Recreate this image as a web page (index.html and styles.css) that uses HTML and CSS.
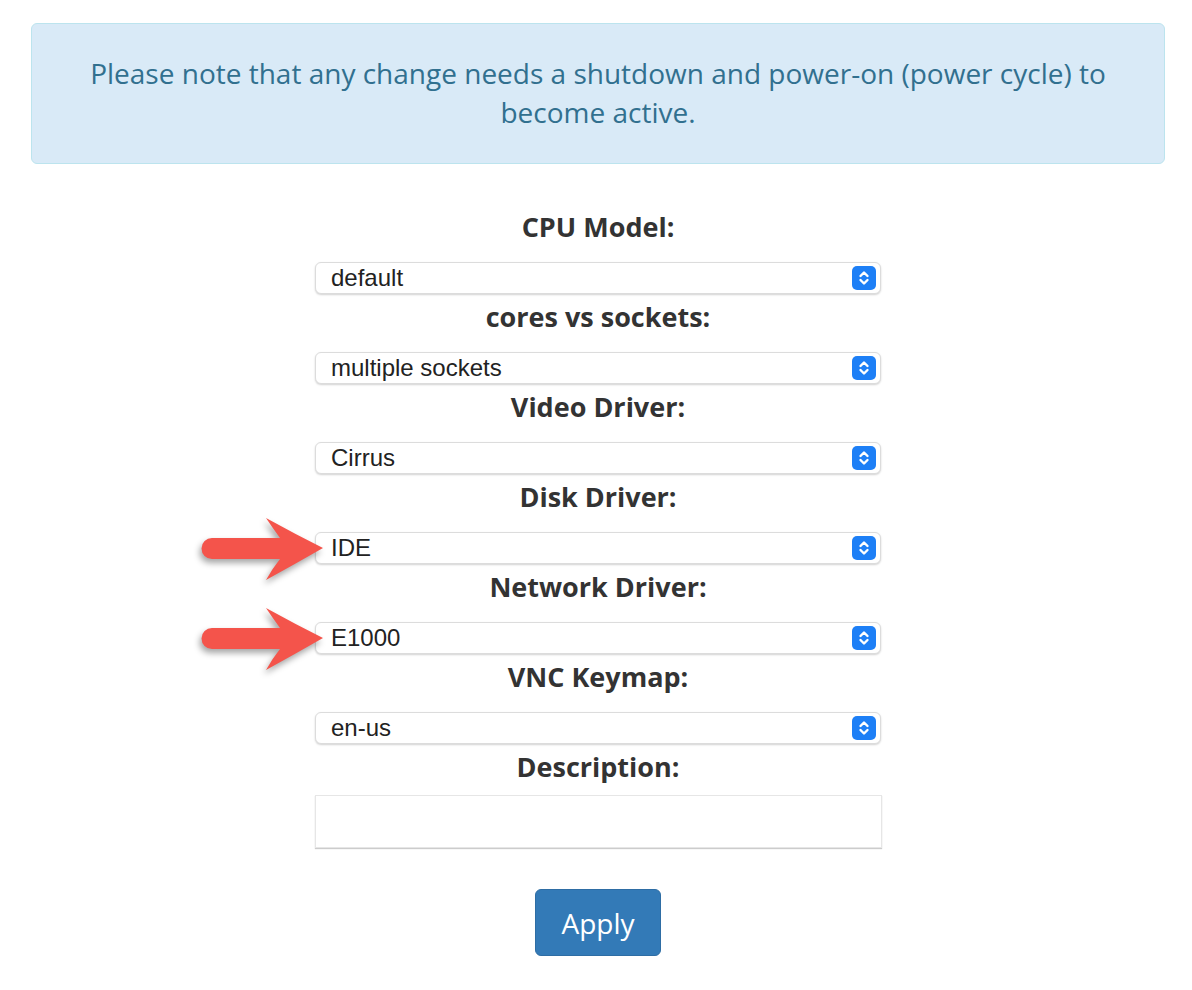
FILE: index.html
```html
<!DOCTYPE html>
<html lang="en">
<head>
  <meta charset="UTF-8">
  <meta name="viewport" content="width=device-width, initial-scale=1.0">
  <title>VM Settings</title>
  <link rel="stylesheet" href="styles.css">
</head>
<body>

  <div class="page">
    <div class="alert-info">
      Please note that any change needs a shutdown and power-on (power cycle) to become active.
    </div>

    <form class="settings">
      <label class="field-label" for="cpu">CPU Model:</label>
      <div class="select-wrap">
        <select id="cpu" class="field-select"><option>default</option></select>
        <svg class="select-btn" viewBox="0 0 24 24"><rect width="24" height="24" rx="5"/><path d="M8.5 10 L12 6.5 L15.5 10 M8.5 14 L12 17.5 L15.5 14"/></svg>
      </div>

      <label class="field-label" for="cores">cores vs sockets:</label>
      <div class="select-wrap">
        <select id="cores" class="field-select"><option>multiple sockets</option></select>
        <svg class="select-btn" viewBox="0 0 24 24"><rect width="24" height="24" rx="5"/><path d="M8.5 10 L12 6.5 L15.5 10 M8.5 14 L12 17.5 L15.5 14"/></svg>
      </div>

      <label class="field-label" for="video">Video Driver:</label>
      <div class="select-wrap">
        <select id="video" class="field-select"><option>Cirrus</option></select>
        <svg class="select-btn" viewBox="0 0 24 24"><rect width="24" height="24" rx="5"/><path d="M8.5 10 L12 6.5 L15.5 10 M8.5 14 L12 17.5 L15.5 14"/></svg>
      </div>

      <label class="field-label" for="disk">Disk Driver:</label>
      <div class="select-wrap">
        <select id="disk" class="field-select"><option>IDE</option></select>
        <svg class="select-btn" viewBox="0 0 24 24"><rect width="24" height="24" rx="5"/><path d="M8.5 10 L12 6.5 L15.5 10 M8.5 14 L12 17.5 L15.5 14"/></svg>
        <!-- callout arrow -->
        <svg class="callout" viewBox="0 0 124 64"><path d="M12 21 L80 21 Q72 10 66 1 Q95 17 123 31 Q95 47 66 63 Q72 52 80 42 L12 42 A10.5 10.5 0 0 1 12 21 Z"/></svg>
      </div>

      <label class="field-label" for="net">Network Driver:</label>
      <div class="select-wrap">
        <select id="net" class="field-select"><option>E1000</option></select>
        <svg class="select-btn" viewBox="0 0 24 24"><rect width="24" height="24" rx="5"/><path d="M8.5 10 L12 6.5 L15.5 10 M8.5 14 L12 17.5 L15.5 14"/></svg>
        <svg class="callout" viewBox="0 0 124 64"><path d="M12 21 L80 21 Q72 10 66 1 Q95 17 123 31 Q95 47 66 63 Q72 52 80 42 L12 42 A10.5 10.5 0 0 1 12 21 Z"/></svg>
      </div>

      <label class="field-label" for="keymap">VNC Keymap:</label>
      <div class="select-wrap">
        <select id="keymap" class="field-select"><option>en-us</option></select>
        <svg class="select-btn" viewBox="0 0 24 24"><rect width="24" height="24" rx="5"/><path d="M8.5 10 L12 6.5 L15.5 10 M8.5 14 L12 17.5 L15.5 14"/></svg>
      </div>

      <label class="field-label desc-label" for="desc">Description:</label>
      <textarea id="desc" class="field-text"></textarea>

      <button type="button" class="btn-apply">Apply</button>
    </form>
  </div>

</body>
</html>
```

FILE: styles.css
```css
body {
    margin: 0;
    padding: 0;
    background-color: #fff;
    font-family: "Open Sans", sans-serif;
    color: #333;
}

.page {
    margin: 0 27px 0 31px;
    padding-top: 23px;
    padding-bottom: 34px;
}

.alert-info {
    background-color: #d9eaf7;
    border: 1px solid #bce4ee;
    border-radius: 6px;
    color: #31708f;
    font-size: 28px;
    line-height: 39px;
    text-align: center;
    padding: 30px 56px 31px;
}

.settings {
    width: 566px;
    margin: 45px auto 0;
    display: flex;
    flex-direction: column;
    align-items: stretch;
}

.field-label {
    display: block;
    text-align: center;
    font-size: 27px;
    font-weight: 700;
    line-height: 36px;
    margin-bottom: 17px;
}

.desc-label {
    margin-bottom: 10px;
}

.select-wrap {
    position: relative;
    margin-bottom: 5px;
}

.field-select {
    display: block;
    width: 100%;
    height: 32px;
    margin: 0;
    padding: 0 40px 0 15px;
    appearance: none;
    -webkit-appearance: none;
    background-color: #fff;
    border: 1px solid #dcdcdc;
    border-radius: 6px;
    box-shadow: 0 1px 2px rgba(0, 0, 0, 0.18);
    font-family: "Liberation Sans", Arial, sans-serif;
    font-size: 24px;
    line-height: 30px;
    color: #222;
}

.select-btn {
    position: absolute;
    right: 5px;
    top: 4px;
    width: 24px;
    height: 24px;
    pointer-events: none;
}

.select-btn rect {
    fill: #1d7ff6;
}

.select-btn path {
    fill: none;
    stroke: #fff;
    stroke-width: 2.4;
    stroke-linecap: round;
    stroke-linejoin: round;
}

.callout {
    position: absolute;
    left: -115px;
    top: -15px;
    width: 124px;
    height: 64px;
    overflow: visible;
    filter: drop-shadow(-2px 4px 3px rgba(0, 0, 0, 0.35));
}

.callout path {
    fill: #f4544b;
}

.field-text {
    display: block;
    width: 567px;
    height: 53px;
    box-sizing: border-box;
    margin: 0;
    border: 1px solid #e6e6e6;
    border-radius: 0;
    box-shadow: 0 1px 1px rgba(0, 0, 0, 0.2);
    resize: none;
}

.btn-apply {
    align-self: center;
    margin-top: 41px;
    width: 126px;
    height: 67px;
    background-color: #337ab7;
    border: 1px solid #2e6da4;
    border-radius: 6px;
    color: #fff;
    font-family: "Open Sans", sans-serif;
    font-size: 28px;
    padding: 0;
}
```
